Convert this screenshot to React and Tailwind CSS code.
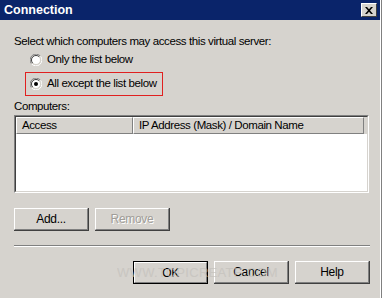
import { useState } from 'react';

const font = { fontFamily: '"Liberation Sans", Arial, sans-serif' };

function Radio({ checked }) {
  return (
    <svg width="12" height="12" viewBox="0 0 12 12" className="shrink-0">
      <path d="M10.5 2.2A5.5 5.5 0 0 0 1.5 9.8" fill="none" stroke="#808080" />
      <path d="M1.5 9.8A5.5 5.5 0 0 0 10.5 2.2" fill="none" stroke="#ffffff" />
      <circle cx="6" cy="6" r="4.5" fill="#ffffff" />
      <path d="M9.2 2.8A4.5 4.5 0 0 0 2.8 9.2" fill="none" stroke="#404040" />
      <path d="M2.8 9.2A4.5 4.5 0 0 0 9.2 2.8" fill="none" stroke="#d4d0c8" />
      {checked && <circle cx="6" cy="6" r="2" fill="#000000" />}
    </svg>
  );
}

function Button({ children, disabled, isDefault, className = '' }) {
  return (
    <div
      className={`flex h-[23px] w-[75px] items-center justify-center ${
        isDefault ? 'border border-black' : 'border-r border-b border-[#404040]'
      } ${className}`}
    >
      <div className="flex h-full w-full items-center justify-center border-t border-l border-white border-r border-b border-r-[#808080] border-b-[#808080] bg-[#d6d3ce]">
        <span
          className={`text-[12px] leading-none tracking-[-0.3px] ${disabled ? 'text-[#a09d98] [text-shadow:1px_1px_0_#ffffff]' : 'text-black'}`}
        >
          {children}
        </span>
      </div>
    </div>
  );
}

export default function App() {
  const [choice, setChoice] = useState('except');

  return (
    <div className="relative h-[298px] w-[382px] overflow-hidden bg-[#d6d3ce]" style={font}>
      <div className="flex h-[20px] items-center justify-between bg-[#0a246a] pl-[4px] pr-[5px]">
        <span className="text-[12.5px] font-bold leading-none text-white">Connection</span>
        <div className="flex h-[14px] w-[16px] items-center justify-center border-t border-l border-white border-r border-b border-r-[#404040] border-b-[#404040] bg-[#d6d3ce]">
          <svg width="8" height="7" viewBox="0 0 8 7">
            <path d="M0 0h2l2 2.3L6 0h2L5 3.5 8 7H6L4 4.7 2 7H0l3-3.5z" fill="#000" />
          </svg>
        </div>
      </div>

      <div className="absolute top-0 right-0 h-full w-[2px] border-l border-white bg-[#808080]" />

      <div className="pl-[14px] pr-[14px]">
        <p className="mt-[14px] h-[14px] whitespace-nowrap text-[11.5px] leading-[14px] tracking-[-0.4px] text-black">
          Select which computers may access this virtual server:
        </p>

        <div
          className="mt-[4px] ml-[16px] flex h-[16px] cursor-default items-center gap-[5px]"
          onClick={() => setChoice('only')}
        >
          <Radio checked={choice === 'only'} />
          <span className="whitespace-nowrap text-[11.5px] leading-none tracking-[-0.4px] text-black">
            Only the list below
          </span>
        </div>

        <div
          className="mt-[4px] ml-[11px] flex h-[24px] w-[138px] cursor-default items-center gap-[5px] border border-[#e02020] pl-[4px]"
          onClick={() => setChoice('except')}
        >
          <Radio checked={choice === 'except'} />
          <span className="whitespace-nowrap text-[11.5px] leading-none tracking-[-0.4px] text-black">
            All except the list below
          </span>
        </div>

        <p className="mt-[3px] h-[14px] text-[11.5px] leading-[14px] tracking-[-0.4px] text-black">Computers:</p>

        <div className="mt-[2px] h-[78px] w-[355px] border-t border-l border-[#808080] border-r border-b border-r-white border-b-white">
          <div className="flex h-full flex-col border-t border-l border-[#404040] border-r border-b border-r-[#d6d3ce] border-b-[#d6d3ce] bg-white">
            <div className="flex h-[17px] shrink-0">
              <div className="flex w-[117px] items-center border-t border-l border-white border-r border-b border-r-[#808080] border-b-[#808080] bg-[#d6d3ce] pl-[5px]">
                <span className="text-[11.5px] leading-none tracking-[-0.4px] text-black">Access</span>
              </div>
              <div className="flex flex-1 items-center border-t border-l border-white border-r border-b border-r-[#808080] border-b-[#808080] bg-[#d6d3ce] pl-[5px]">
                <span className="whitespace-nowrap text-[11.5px] leading-none tracking-[-0.4px] text-black">
                  IP Address (Mask) / Domain Name
                </span>
              </div>
              <div className="w-[3px] bg-[#d6d3ce]" />
            </div>
            <div className="flex-1" />
          </div>
        </div>

        <div className="mt-[15px] flex gap-[6px]">
          <Button>Add...</Button>
          <Button disabled>Remove</Button>
        </div>

        <div className="mt-[14px] h-[2px] w-[356px] border-b border-white bg-[#808080]" />

        <div className="mt-[14px] flex w-[356px] justify-end gap-[6px]">
          <Button isDefault>OK</Button>
          <Button>Cancel</Button>
          <Button>Help</Button>
        </div>
      </div>

      <span className="pointer-events-none absolute top-[266px] left-[117px] whitespace-nowrap text-[13px] leading-none tracking-[0.3px] text-[#c4c1bc] opacity-70">
        WWW.TOPICREATE.COM
      </span>
    </div>
  );
}
